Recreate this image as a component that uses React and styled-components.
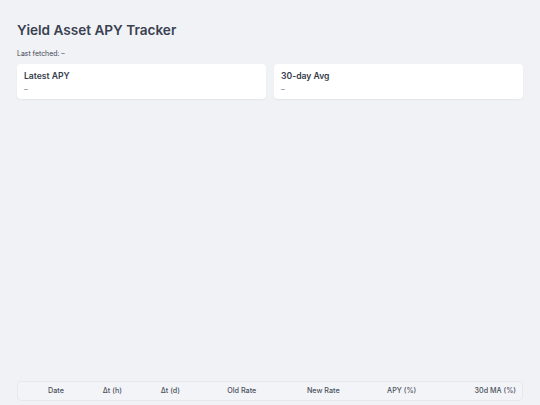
import React from "react";
import styled, { createGlobalStyle } from "styled-components";

const GlobalStyle = createGlobalStyle`
  html, body {
    margin: 0;
    padding: 0;
    background: #f1f2f6;
    font-family: Inter, "Noto Sans", "Liberation Sans", sans-serif;
    color: #374151;
  }
`;

const Page = styled.div`
  padding: 20px 17px 0;
`;

const Title = styled.h1`
  font-size: 13.6px;
  font-weight: 600;
  margin: 0 0 9px;
  line-height: 20px;
  color: #3a4150;
`;

const Fetched = styled.p`
  font-size: 6.9px;
  margin: 0 0 5px;
  line-height: 10px;
  color: #3f4554;
`;

const Stats = styled.div`
  display: grid;
  grid-template-columns: 1fr 1fr;
  gap: 8px;
`;

const Card = styled.div`
  background: #ffffff;
  border-radius: 4px;
  box-shadow: 0 1px 2px rgba(15, 23, 42, 0.06);
  padding: 6px 7px 0;
  height: 35px;
  box-sizing: border-box;
`;

const CardLabel = styled.div`
  font-size: 8.6px;
  font-weight: 600;
  line-height: 12px;
  color: #363c4a;
`;

const CardValue = styled.div`
  font-size: 7.5px;
  line-height: 13px;
  margin-top: 1px;
  color: #6b7280;
`;

const ChartArea = styled.div`
  height: 282px;
`;

const Table = styled.table`
  width: 100%;
  border-collapse: separate;
  border-spacing: 0;
  border: 1px solid #e6e8ee;
  border-radius: 4px;
  background: #f3f4f7;
`;

const Th = styled.th`
  font-size: 7.2px;
  font-weight: 500;
  color: #4b5160;
  text-align: right;
  padding: 5px 6px;
  line-height: 8px;
  white-space: nowrap;
`;

const columns = ["Date", "Δt (h)", "Δt (d)", "Old Rate", "New Rate", "APY (%)", "30d MA (%)"];

const App = () => {
  return (
    <Page>
      <GlobalStyle />
      <Title>Yield Asset APY Tracker</Title>
      <Fetched>Last fetched: –</Fetched>
      <Stats>
        <Card>
          <CardLabel>Latest APY</CardLabel>
          <CardValue>–</CardValue>
        </Card>
        <Card>
          <CardLabel>30-day Avg</CardLabel>
          <CardValue>–</CardValue>
        </Card>
      </Stats>
      <ChartArea />
      <Table>
        <thead>
          <tr>
            {columns.map((c) => (
              <Th key={c}>{c}</Th>
            ))}
          </tr>
        </thead>
        <tbody />
      </Table>
    </Page>
  );
};

export default App;
